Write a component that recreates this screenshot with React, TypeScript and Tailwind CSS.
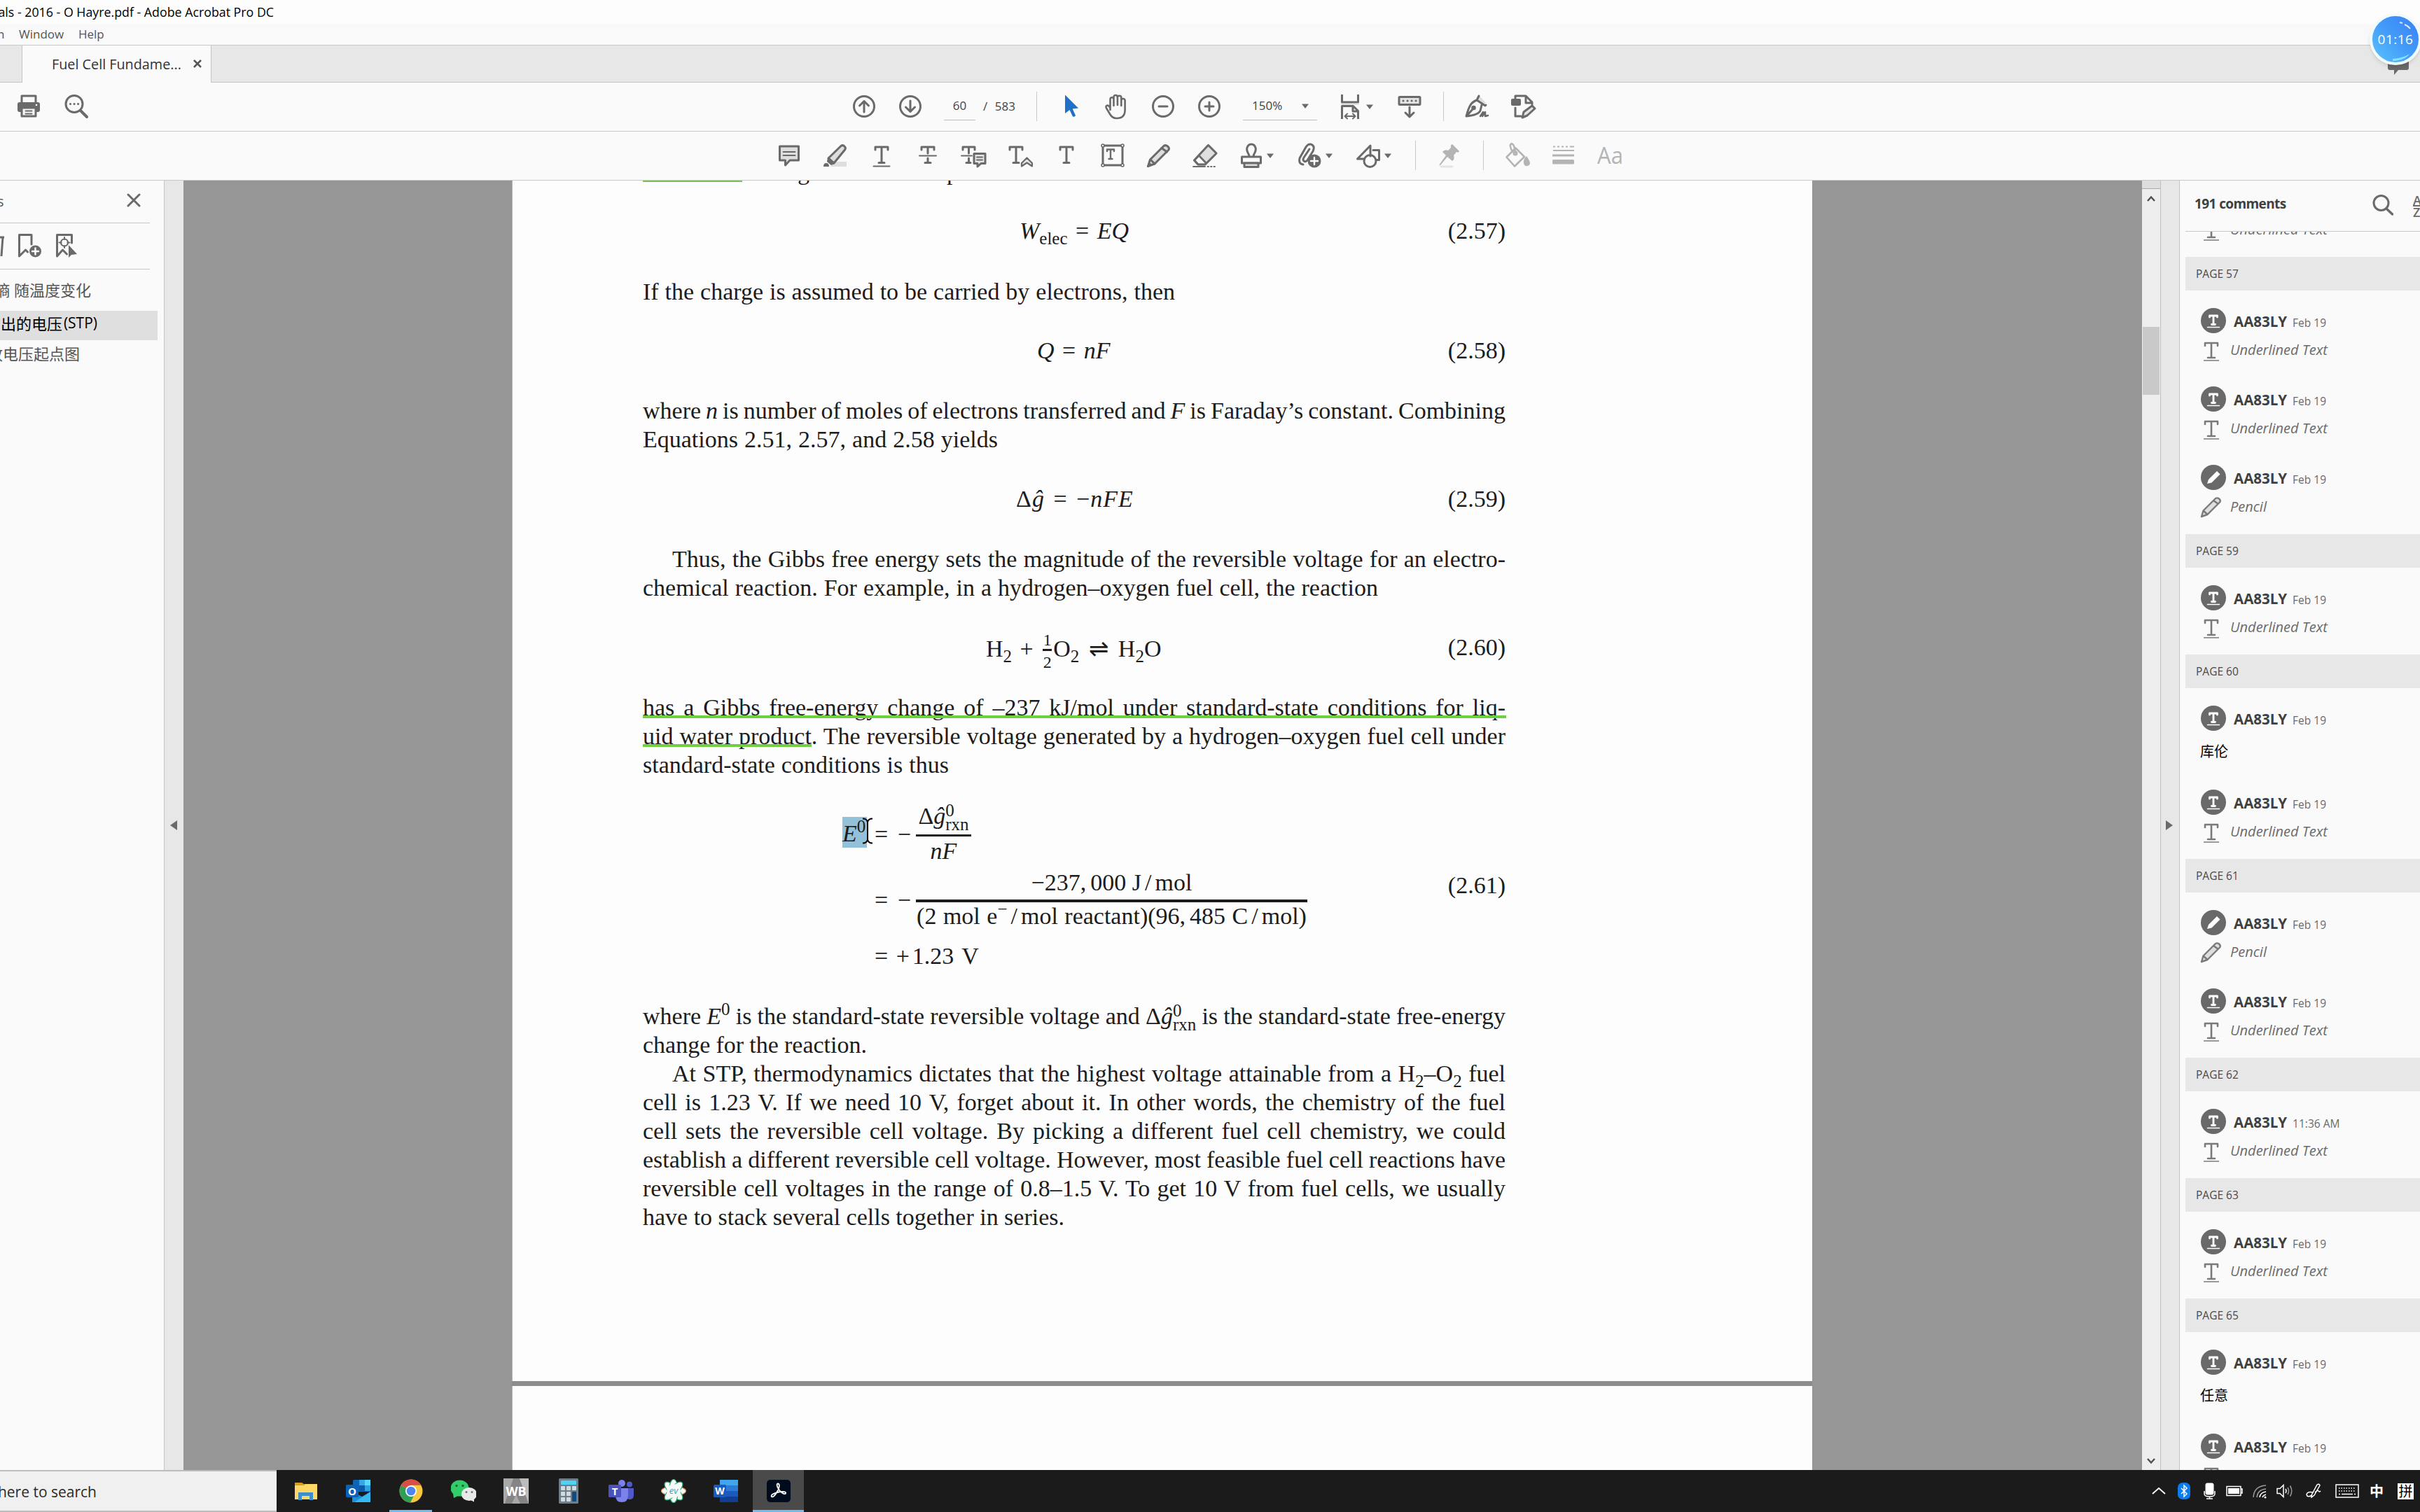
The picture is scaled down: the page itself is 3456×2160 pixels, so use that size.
import React from "react";

type IcoProps = { children: React.ReactNode; className?: string };

const Ico = ({ children, className = "" }: IcoProps) => (
  <svg
    viewBox="0 0 36 36"
    className={"w-9 h-9 shrink-0 overflow-visible fill-none stroke-[#6a6a6a] stroke-3 " + className}
    strokeLinecap="round"
    strokeLinejoin="round"
  >
    {children}
  </svg>
);

const Caret = ({ className = "" }: { className?: string }) => (
  <svg viewBox="0 0 12 12" className={"w-3 h-3 shrink-0 fill-[#6a6a6a] " + className}>
    <path d="M1 3.5h10L6 10z" />
  </svg>
);

const Sep = () => <div className="w-px h-[42px] bg-[#c8c8c8] shrink-0" />;

/* ---------- Toolbars ---------- */

const PageTools = () => (
  <div className="h-[70px] pl-[23px] pb-[2px] flex items-center border-b border-[#c8c8c8] bg-[#fafafa] font-['Open_Sans',sans-serif]">
    <div className="flex gap-8">
      <Ico>
        <path d="M8 12V3h20v9" />
        <rect x="2" y="12" width="32" height="14" rx="3" fill="#6a6a6a" stroke="none" />
        <rect x="8" y="20" width="20" height="12" fill="#f4f4f4" />
        <path d="M13.5 24.5h9M13.5 28.500h9" strokeWidth="1.8" />
        <circle cx="29" cy="16" r="1.3" fill="#fff" stroke="none" />
      </Ico>
      <Ico>
        <circle cx="15" cy="14.500" r="12" />
        <path d="M24 24l9 9" strokeWidth="4" />
        <path d="M9.500 14.500h.1M15 14.500h.1M20.500 14.500h.1" />
      </Ico>
    </div>

    <div className="ml-[1089px] flex items-center gap-[30px]">
      <Ico>
        <circle cx="18" cy="18" r="14.500" />
        <path d="M18 26V11M11.500 17L18 10.500l6.500 6.500" />
      </Ico>
      <Ico>
        <circle cx="18" cy="18" r="14.500" />
        <path d="M18 10v15M11.500 19L18 25.500l6.500-6.500" />
      </Ico>
      <div className="flex items-center">
        <div className="w-[45px] h-[41px] border-b border-[#bdbdbd] text-center text-[17px] leading-[40px] text-[#444]">
          60
        </div>
        <div className="ml-[11px] w-[46px] flex justify-between text-[17px] text-[#444]">
          <span>/</span>
          <span>583</span>
        </div>
      </div>
      <Sep />
      <Ico className="ml-px">
        <path
          d="M9 1.500v26.500l6.500-5 4.500 9.500q3 1 4-1.500l-4.300-9.500 8.300-1z"
          fill="#1f70c8"
          stroke="none"
        />
      </Ico>
      <Ico className="-ml-px">
        <path
          strokeWidth="2.600"
          d="M8.500 23V8q0-2.700 2.500-2.700T13.500 8v9M13.500 16V5q0-3 2.700-3t2.700 3v11M18.900 16V5.500q0-2.700 2.700-2.700T24.300 5.500V17M24.300 17V9.500q0-2.500 2.500-2.500t2.800 2.500V23q0 12-12 12-6 0-9.500-6L3 20.500q-1.500-3 1-3.800 1.500-.5 3 1.300L8.500 20"
        />
      </Ico>
      <Ico>
        <circle cx="18" cy="18" r="14.500" />
        <path d="M12 18h12" />
      </Ico>
      <Ico>
        <circle cx="18" cy="18" r="14.500" />
        <path d="M12 18h12M18 12v12" />
      </Ico>
      <div className="w-[106px] h-[41px] border-b border-[#bdbdbd] pl-[13px] pr-[11px] flex items-center justify-between text-[17px] text-[#444]">
        <span>150%</span>
        <Caret />
      </div>
      <div className="flex items-center gap-1 -ml-px">
        <Ico>
          <path d="M6.500 1v11h23V1" strokeLinecap="butt" />
          <path d="M6 14.800h24" stroke="#ddd" strokeWidth="2" />
          <path d="M6.500 36V17.500h16l7 7V36M22 17.500V25h7.500" strokeLinecap="butt" />
          <path d="M11 32h14M14 28.500L10.500 32l3.500 3.500M22 28.500l3.500 3.500-3.500 3.500" strokeWidth="2" />
        </Ico>
        <Caret />
      </div>
      <Ico className="ml-[3px]">
        <rect x="3" y="4.500" width="30" height="11" rx="1" fill="#e4e4e4" />
        <path d="M9 10h.1M15 10h.1M21 10h.1M27 10h.1" />
        <path d="M18 19v13M12 27l6 6 6-6" />
      </Ico>
      <Sep />
      <Ico>
        <path d="M21 3L30 13 26 17 17 9z" fill="#ddd" stroke="none" />
        <path d="M20 3l-3 6L29 17l1-1M17 9C9 12 6 17 2 32c11-1 18-3 20-8l2-8M3 31l9-10" />
        <circle cx="12.500" cy="20" r="1.800" fill="#6a6a6a" />
        <path d="M22 32q4-6 4-6l-1 6 4-6v6l4-1" strokeWidth="2.500" />
      </Ico>
      <Ico>
        <path d="M6 9V3h15l9 9v3M21 3v10h7M6 20v12h8" />
        <rect x="0" y="7" width="14" height="10" rx="2" fill="#6a6a6a" stroke="none" />
        <path d="M16 34l2-8 12-9 4 4-11 10z" fill="#e4e4e4" />
      </Ico>
    </div>
  </div>
);

const LetterT = () => <path d="M9 10V6h18v4M18 6v22.500M14 28.500h8" />;

const CommentTools = () => (
  <div className="h-[70px] pl-[1109px] pb-[2px] flex items-center gap-[30px] border-b border-[#c8c8c8] bg-[#fafafa]">
    <Ico>
      <path d="M4.500 5h27v20H19l-6.500 7V25h-8z" fill="#dedede" />
      <path d="M9.500 13h17M9.500 18h17" strokeWidth="1.800" />
    </Ico>
    <Ico>
      <path d="M10 34l9-7h15v7z" fill="#dedede" stroke="none" />
      <path d="M8 22L26 4.500q2.500-2 5 .5t.5 5L16 29z" fill="#dedede" />
      <path d="M7 21l10 9-5 2-6-5zM1 34q0-5 4-5t4 5z" fill="#6a6a6a" stroke="none" />
    </Ico>
    <Ico>
      <LetterT />
      <path d="M6.500 33.500h23" strokeWidth="2" />
    </Ico>
    <Ico>
      <path d="M9 10V6h18v4M18 6v9M18 22v6.500M14 28.500h8" />
      <path d="M6 18.500h24" strokeWidth="2" />
    </Ico>
    <Ico>
      <path d="M2 10V6h17v4M10.500 6v9M10.500 22v6.500M7 28.500h6" />
      <path d="M0 18.500h15" strokeWidth="2" />
      <path d="M18 15.500h16v14H28l-5 4.500v-4.500h-5z" fill="#e4e4e4" />
      <path d="M22 20.500h8M22 24.500h8" strokeWidth="1.800" />
    </Ico>
    <Ico>
      <path d="M3 10V6h18v4M12 6v22.500M8 28.500h8" />
      <path d="M20 29l7.500-7.500L35 29v4.500l-7.500-5-7.500 5z" fill="#e4e4e4" strokeWidth="2.200" />
    </Ico>
    <Ico>
      <LetterT />
    </Ico>
    <Ico>
      <rect x="4" y="4" width="28" height="28" />
      <path d="M10 12V9.500h10V12M15 9.500V23M12.500 23h5" strokeWidth="2.400" />
      <g fill="#fafafa" strokeWidth="1.600">
        <circle cx="4" cy="4" r="2" />
        <circle cx="32" cy="4" r="2" />
        <circle cx="4" cy="32" r="2" />
        <circle cx="32" cy="32" r="2" />
      </g>
    </Ico>
    <Ico>
      <path d="M2.500 33.500l3-9.500L25 4.500q2.500-2 5.500.5t1.500 5L12 30z" fill="#dedede" />
      <path d="M6 24l6 6M22 7.500l7.500 5.500M2.500 33.500l3-3" />
    </Ico>
    <Ico>
      <path d="M22.500 3.500L34 15 18 31H8L2.500 25z" fill="#fafafa" />
      <path d="M22.500 4.500L33 15 19 29 9 18.500z" fill="#dedede" stroke="none" />
      <path d="M22.500 3.500L34 15 18 31H8L2.500 25zM9 18l10.500 11" strokeWidth="2.600" />
      <path d="M1 34h17M21.500 34h1.500M26 34h1.500M30.500 34h1.500" strokeWidth="1.800" />
    </Ico>
    <div className="flex items-center gap-[3px]">
      <Ico>
        <path d="M15 20q0-3-2-6-2-4-1-7 1.500-5 6-5t6 5q1 3-1 7-2 3-2 6M4.500 20h27v9h-27z" />
        <path d="M8 29h20v5.500H8z" fill="#dedede" />
      </Ico>
      <Caret />
    </div>
    <div className="ml-[2px] flex items-center gap-1">
      <Ico>
        <path d="M9 31Q2 30 4 22L13 6q4-6 9-3 4 3 1 9l-8 13q-3 3-5 1-2-2 0-5L18 9" />
        <circle cx="25" cy="26" r="9.500" fill="#6a6a6a" stroke="none" />
        <path d="M25 21v10M20 26h10" stroke="#fff" strokeWidth="2.400" />
      </Ico>
      <Caret />
    </div>
    <div className="ml-[2px] flex items-center gap-1">
      <Ico>
        <path d="M12 23H2.500L21 4v15M25 10.500h8.500v14H30" />
        <circle cx="20.500" cy="26" r="8.500" />
      </Ico>
      <Caret />
    </div>
    <div className="ml-[3px] flex">
      <Sep />
    </div>
    <Ico>
      <path d="M6 34h16" stroke="#e4e4e4" />
      <path
        d="M22 2l10 10q-1 3-4 1l-4 5q2 5-2 8L15 20 5 32l-1.500.5.5-2L13 18 8 13q3-4 8-2l4-4q-1-4 2-5z"
        fill="#b4b4b4"
        stroke="none"
      />
    </Ico>
    <Sep />
    <Ico>
      <g stroke="#b4b4b4">
        <path d="M15.500 7.500L28 20 14 33.500 2.500 20.500zM11 13q-5-9-2-11.500 4-2 6 12" strokeWidth="2.600" />
        <circle cx="15" cy="15" r="2" />
        <path d="M31 19q5 7 5 10t-4 4-5-4 4-10z" fill="#b4b4b4" stroke="none" />
      </g>
    </Ico>
    <Ico>
      <g stroke="#b4b4b4" strokeLinecap="butt">
        <path d="M3 5.500h3M9 5.500h3M15 5.500h3M21 5.500h3M27 5.500h6M3 11h30" strokeWidth="1.800" />
        <path d="M2 18h31" />
        <rect x="2" y="24" width="31" height="6.500" rx="1.500" fill="#b4b4b4" stroke="none" />
      </g>
    </Ico>
    <div className="w-9 font-['Open_Sans',sans-serif] text-[32px] leading-9 text-[#b4b4b4]">
      <span className="inline-block origin-left scale-x-[.97]">Aa</span>
    </div>
  </div>
);

/* ---------- Bookmarks ---------- */

const Bookmarks = () => (
  <div className="w-[235px] shrink-0 border-r border-[#c4c4c4] bg-[#fafafa] text-[22px] text-[#555] font-['Open_Sans','Noto_Sans_CJK_SC',sans-serif]">
    <div className="w-[214px] h-[61px] border-b border-[#c8c8c8] flex items-center justify-between overflow-hidden">
      <span className="-ml-[4px] text-[20px]">s</span>
      <svg viewBox="0 0 20 20" className="w-5 h-5 mr-[13px] mb-[5px] stroke-[#6a6a6a] stroke-3">
        <path d="M2 2l16 16M18 2L2 18" strokeLinecap="round" />
      </svg>
    </div>
    <div className="w-[214px] h-[66px] pb-[2px] border-b border-[#c8c8c8] flex items-center">
      <svg viewBox="0 0 6 36" className="w-1.5 h-9 fill-none stroke-[#6a6a6a] stroke-3">
        <path d="M0 6h6M4 6L2 33" />
      </svg>
      <Ico className="ml-[18px]">
        <path d="M21 16V2.500H3.500V33l9-9 3 3" />
        <circle cx="26.500" cy="26" r="8.500" fill="#6a6a6a" stroke="none" />
        <path d="M26.500 21.500v9M22 26h9" stroke="#fff" strokeWidth="2.400" />
      </Ico>
      <Ico className="ml-[18px]">
        <path d="M24.500 14V2.500H3.500V33l8-9 6 6" />
        <circle cx="14" cy="13.500" r="5" strokeWidth="2.200" />
        <path d="M14 6v3M14 18v3M6.500 13.500h3M18.500 13.500h3" strokeWidth="2" />
        <path d="M20 17v18l4-4 8-1z" fill="#6a6a6a" stroke="none" />
      </Ico>
    </div>
    <div className="mt-[8px] w-[130px] h-[42px] flex items-center justify-end overflow-hidden whitespace-pre">
      熵 随温度变化
    </div>
    <div className="mt-[9px] w-[225px] h-[42px] bg-[#dfdfdf] text-black">
      <div className="w-[139px] h-9 flex items-center justify-end overflow-hidden whitespace-nowrap">
        出的电压<span className="pl-[2px] text-[21px]">(STP)</span>
      </div>
    </div>
    <div className="-mt-[2px] w-[114px] h-[42px] flex items-center justify-end overflow-hidden whitespace-nowrap">
      放电压起点图
    </div>
  </div>
);

/* ---------- Document ---------- */

const Sub = ({ children }: { children: React.ReactNode }) => (
  <span className="text-[25px] leading-[0] align-[-8px]">{children}</span>
);
const Sup = ({ children }: { children: React.ReactNode }) => (
  <span className="text-[25px] leading-[0] align-[13px]">{children}</span>
);

const DeltaG = () => (
  <span className="whitespace-nowrap">
    Δ<i>ĝ</i>
    <span className="inline-flex flex-col text-[25px] leading-[20px] align-[11px] text-left">
      <span>0</span>
      <span>rxn</span>
    </span>
  </span>
);

// one typeset line, stretched to its measured width
const Line = ({ className, children }: { className: string; children: React.ReactNode }) => (
  <div
    className={"relative h-[41px] whitespace-nowrap [word-spacing:-2px] [text-align-last:justify] " + className}
  >
    {children}
  </div>
);

const Equation = ({ className, no, children }: { className: string; no: string; children: React.ReactNode }) => (
  <div className="h-[41px] flex justify-between whitespace-nowrap [word-spacing:3px]">
    <div className={className}>{children}</div>
    <div>({no})</div>
  </div>
);

const PdfPage = () => (
  <div className="h-[1715px] pl-[186px] bg-[#fdfdfd] border-l border-[#b5b5b5] text-[#1c1c1c] text-[34px] leading-[41px] font-['Liberation_Serif',serif]">
    <div className="w-[1232px]">
      <div className="relative h-2 flex items-end overflow-hidden">
        <div className="absolute left-0 top-0 w-[142px] h-[2px] bg-[#7cc05a]" />
        <span className="ml-[221px]">g</span>
        <span className="ml-[196px]">p</span>
      </div>
      <div className="mt-[43px]">
        <Equation className="ml-[538px]" no="2.57">
          <i>W</i>
          <Sub>elec</Sub> = <i>EQ</i>
        </Equation>
      </div>
      <Line className="mt-[46px] w-[760px]">If the charge is assumed to be carried by electrons, then</Line>
      <div className="mt-[43px]">
        <Equation className="ml-[563px]" no="2.58">
          <i>Q</i> = <i>nF</i>
        </Equation>
      </div>
      <Line className="mt-[45px] w-[1232px]">
        where <i>n</i> is number of moles of electrons transferred and <i>F</i> is Faraday’s constant. Combining
      </Line>
      <Line className="w-[507px]">Equations 2.51, 2.57, and 2.58 yields</Line>
      <div className="mt-[44px]">
        <Equation className="ml-[533px] tracking-[1px]" no="2.59">
          Δ<i>ĝ</i> = −<i>nFE</i>
        </Equation>
      </div>
      <Line className="mt-[45px] ml-[42px] w-[1190px]">
        Thus, the Gibbs free energy sets the magnitude of the reversible voltage for an electro-
      </Line>
      <Line className="w-[1050px]">chemical reaction. For example, in a hydrogen–oxygen fuel cell, the reaction</Line>
      <div className="mt-[44px]">
        <Equation className="ml-[490px]" no="2.60">
          H<Sub>2</Sub> +{" "}
          <span className="mx-[2px] inline-flex flex-col items-center text-[24px] leading-[20px] align-[16px]">
            <span>1</span>
            <span className="w-[13px] h-[3px] my-[3px] bg-[#1c1c1c]" />
            <span className="mt-[3px]">2</span>
          </span>
          O<Sub>2</Sub> <span className="mx-[2px] font-['DejaVu_Sans',sans-serif] leading-[0]">⇌</span> H
          <Sub>2</Sub>O
        </Equation>
      </div>
      <Line className="mt-[45px] w-[1232px]">
        has a Gibbs free-energy change of –237 kJ/mol under standard-state conditions for liq-
        <span className="absolute left-0 top-[32px] w-[1233px] h-1 bg-[#6fcf41]" />
      </Line>
      <Line className="w-[1232px]">
        uid water product. The reversible voltage generated by a hydrogen–oxygen fuel cell under
        <span className="absolute left-0 top-[32px] w-[241px] h-1 bg-[#6fcf41]" />
      </Line>
      <Line className="w-[437px]">standard-state conditions is thus</Line>

      <div className="mt-8 flex justify-between whitespace-nowrap">
        <div className="ml-[285px]">
          <div className="flex h-[91px]">
            <div className="relative mt-[22px] w-[35px] h-[44px] bg-[#94c1da] pt-[3px]">
              <i>E</i>
              <Sup>0</Sup>
              <svg
                viewBox="0 0 16 38"
                className="absolute left-[28px] top-px w-4 h-[38px] fill-none stroke-black stroke-2"
              >
                <path d="M1 1.500q6 0 7 5 1-5 7-5M8 6v26M1 36.500q6 0 7-5 1 5 7 5" />
              </svg>
            </div>
            <div className="mt-[26px] ml-[11px] w-[59px]">
              = <span className="ml-[5px]">−</span>
            </div>
            <div className="w-[79px] text-center">
              <div className="h-[47px] border-b-[3px] border-[#1c1c1c] box-content">
                <DeltaG />
              </div>
              <i>nF</i>
            </div>
          </div>
          <div className="mt-1 flex h-[89px]">
            <div className="mt-[25px] ml-[46px] w-[59px]">
              = <span className="ml-[5px]">−</span>
            </div>
            <div className="w-[559px] text-center">
              <div className="h-[45px] border-b-4 border-[#1c1c1c] box-content">
                −237,<span className="ml-[6px]">000</span> J<span className="px-[5px]">/</span>mol
              </div>
              <div className="-mt-px [word-spacing:1px]">
                (2 mol e<Sup>−</Sup>
                <span className="px-[5px]">/</span>mol reactant)(96,<span className="ml-[6px]">485</span> C
                <span className="px-[5px]">/</span>mol)
              </div>
            </div>
          </div>
          <div className="mt-4 ml-[46px] h-[41px] [word-spacing:3px]">
            = +<span className="ml-[4px]">1.23 V</span>
          </div>
        </div>
        <div className="mt-[99px]">(2.61)</div>
      </div>

      <Line className="mt-[45px] w-[1232px]">
        where <i>E</i>
        <Sup>0</Sup> is the standard-state reversible voltage and <DeltaG /> is the standard-state free-energy
      </Line>
      <Line className="w-[320px]">change for the reaction.</Line>
      <Line className="ml-[42px] w-[1190px]">
        At STP, thermodynamics dictates that the highest voltage attainable from a H<Sub>2</Sub>–O<Sub>2</Sub> fuel
      </Line>
      <Line className="w-[1232px]">
        cell is 1.23 V. If we need 10 V, forget about it. In other words, the chemistry of the fuel
      </Line>
      <Line className="w-[1232px]">
        cell sets the reversible cell voltage. By picking a different fuel cell chemistry, we could
      </Line>
      <Line className="w-[1232px]">
        establish a different reversible cell voltage. However, most feasible fuel cell reactions have
      </Line>
      <Line className="w-[1232px]">
        reversible cell voltages in the range of 0.8–1.5 V. To get 10 V from fuel cells, we usually
      </Line>
      <Line className="w-[602px]">have to stack several cells together in series.</Line>
    </div>
  </div>
);

const ScrollBar = () => (
  <div className="w-[27px] shrink-0 border-r border-[#c0c0c0] bg-[#eeeeee] flex flex-col items-center">
    <div className="w-full h-3 bg-[#dedede] border-b border-[#a8a8a8]" />
    <svg viewBox="0 0 12 10" className="mt-[9px] w-3 h-2.5 fill-none stroke-[#505050] stroke-[2.5]">
      <path d="M1 8l5-5.500L11 8" />
    </svg>
    <div className="mt-[178px] w-6 h-[97px] bg-[#c9c9c9]" />
    <svg viewBox="0 0 12 10" className="mt-auto mb-2 w-3 h-2.5 fill-none stroke-[#505050] stroke-[2.5]">
      <path d="M1 2l5 5.500L11 2" />
    </svg>
  </div>
);

/* ---------- Comments ---------- */

type Comment = { kind: "underline" | "pencil"; date?: string; text?: string };
type Section = { page: number; comments: Comment[] };

const sections: Section[] = [
  { page: 57, comments: [{ kind: "underline" }, { kind: "underline" }, { kind: "pencil" }] },
  { page: 59, comments: [{ kind: "underline" }] },
  { page: 60, comments: [{ kind: "underline", text: "库伦" }, { kind: "underline" }] },
  { page: 61, comments: [{ kind: "pencil" }, { kind: "underline" }] },
  { page: 62, comments: [{ kind: "underline", date: "11:36 AM" }] },
  { page: 63, comments: [{ kind: "underline" }] },
  { page: 65, comments: [{ kind: "underline", text: "任意" }, { kind: "underline" }] },
];

const CommentItem = ({ kind, date = "Feb 19", text }: Comment) => (
  <div className={text ? "pl-[22px] h-[84px]" : "pl-[22px] h-[76px]"}>
    <div className="h-9 flex items-center">
      <Ico>
        <circle cx="18" cy="18" r="18" fill="#696969" stroke="none" />
        {kind === "underline" ? (
          <>
            <path d="M12.500 13v-2h11v2M18 11v12.500M15.500 23.500h5" stroke="#fff" strokeWidth="2.800" />
            <path d="M9.500 27.500h17" stroke="#fff" strokeWidth="1.600" />
          </>
        ) : (
          <path d="M9 27l2-6 12-12 4.500 4.500-12 12z" fill="#fff" stroke="none" />
        )}
      </Ico>
      <div className="ml-[11px] mt-px flex items-baseline whitespace-nowrap">
        <span className="text-[20.500px] leading-9 font-bold text-[#404040]">AA83LY</span>
        <span className="ml-2 text-[15.500px] text-[#6a6a6a]">{date}</span>
      </div>
    </div>
    {text ? (
      <div className="mt-3 -ml-px text-[20px] leading-9 text-black">{text}</div>
    ) : (
      <div className="h-10 flex items-center">
        {kind === "underline" ? (
          <svg viewBox="0 0 22 28" className="ml-1 mt-[11px] w-[22px] h-7 fill-none stroke-[#7a7a7a] stroke-[2.600]">
            <path d="M2 6V2h18v4M11 2v21M6 23h10" strokeLinecap="round" strokeLinejoin="round" />
            <path d="M0 27h22" strokeWidth="1.500" />
          </svg>
        ) : (
          <svg viewBox="0 0 31 31" className="-ml-px mt-[8px] w-[31px] h-[31px] fill-[#dedede] stroke-[#7a7a7a] stroke-[2.400]">
            <path d="M2 29l2.500-8.500L22 3q2.500-1.500 5 .5t1.500 4.500L10.500 26zM4.500 20.500l6 5.500M19 6l7 5" strokeLinejoin="round" />
          </svg>
        )}
        <span
          className={
            kind === "underline"
              ? "ml-[16px] mt-[8px] text-[20px] italic text-[#6a6a6a]"
              : "ml-[12px] mt-[8px] text-[20px] italic text-[#6a6a6a]"
          }
        >
          {kind === "underline" ? "Underlined Text" : "Pencil"}
        </span>
      </div>
    )}
  </div>
);

const Comments = () => (
  <div className="w-[344px] shrink-0 pl-2 border-l border-[#c4c4c4] bg-[#fafafa] flex flex-col overflow-hidden font-['Open_Sans','Noto_Sans_CJK_SC',sans-serif]">
    <div className="h-[73px] shrink-0 pl-[13px] border-b border-[#c8c8c8] flex items-center overflow-hidden">
      <span className="w-[254px] shrink-0 mb-[6px] text-[19px] tracking-[-.6px] font-bold text-[#404040]">
        191 comments
      </span>
      <svg viewBox="0 0 30 30" className="w-[30px] h-[30px] shrink-0 mb-[2px] fill-none stroke-[#6a6a6a] stroke-3">
        <circle cx="12.500" cy="12" r="10.500" />
        <path d="M20 20l8.500 8" strokeLinecap="round" strokeWidth="3.500" />
      </svg>
      <div className="ml-[28px] text-[18px] leading-[14px] font-semibold text-[#6a6a6a]">
        <div className="border-b-2 border-[#6a6a6a]">A</div>
        <div className="mt-px">Z</div>
      </div>
    </div>
    <div className="grow overflow-hidden">
      <div className="-mt-[63px] pb-[23px]">
        <CommentItem kind="underline" />
      </div>
      {sections.map((section) => (
        <div key={section.page} className="pb-[23px]">
          <div className="h-12 pl-[15px] mb-[25px] bg-[#e7e7e7] text-[15.500px] leading-[48px] text-[#4a4a4a]">
            PAGE {section.page}
          </div>
          <div className="flex flex-col gap-9">
            {section.comments.map((comment, index) => (
              <CommentItem key={index} {...comment} />
            ))}
          </div>
        </div>
      ))}
    </div>
  </div>
);

/* ---------- Taskbar ---------- */

const TaskIcon = ({ children, state = "" }: { children: React.ReactNode; state?: string }) => (
  <div
    className={
      state === "active"
        ? "w-[73px] mx-px h-[60px] pt-[3px] flex items-center justify-center bg-[#4a4a4a] border-b-[3px] border-[#76b9ed]"
        : "w-[75px] h-[60px] flex items-center justify-center"
    }
  >
    <div
      className={
        state === "running"
          ? "w-[61px] h-[60px] pt-[3px] flex items-center justify-center border-b-[3px] border-[#76b9ed]"
          : "flex"
      }
    >
      <svg viewBox="0 0 36 36" className="w-9 h-9">
        {children}
      </svg>
    </div>
  </div>
);

const Taskbar = () => (
  <div className="h-[60px] bg-[#1b1b1b] flex items-center font-['Open_Sans',sans-serif]">
    <div className="w-[395px] h-[60px] border-y-2 border-[#bdbdbd] bg-[#f0f0f0] overflow-hidden">
      <div className="w-[138px] h-14 pt-[3px] flex items-center justify-end whitespace-nowrap text-[21px] text-[#2b2b2b]">
        here to search
      </div>
    </div>
    <div className="ml-1 flex">
      <TaskIcon>
        <path d="M2 6h10l3 2h4v4H2z" fill="#d79b1e" />
        <path d="M2 10h13l2-2h17v22H2z" fill="#fbd768" />
        <path d="M7 31V20h21v11h-5v-6H12v6z" fill="#3c8fc9" />
      </TaskIcon>
      <TaskIcon>
        <rect x="10" y="2" width="25" height="17" rx="1.500" fill="#1066b5" />
        <path d="M19 2h8v8h-8z" fill="#32a9e7" />
        <path d="M27 2h8v8h-8z" fill="#58d9fd" />
        <path d="M19 10h8v8h-8z" fill="#0b5ba8" />
        <path d="M27 10h8v8h-8z" fill="#2aa2e2" />
        <path d="M9 19l14 7 12-7v15H9z" fill="#1a90dc" />
        <path d="M35 19v15H12z" fill="#37b8f0" />
        <rect x="0" y="9" width="18" height="18" rx="1.500" fill="#0b62b8" />
        <text x="9" y="23.500" textAnchor="middle" fill="#fff" fontSize="15" fontWeight="bold">O</text>
      </TaskIcon>
      <TaskIcon state="running">
        <circle cx="18" cy="18" r="16.500" fill="#f7c73f" />
        <path d="M18 18L3.700 9.800A16.500 16.500 0 0 0 17 34.500L24 21z" fill="#2f9e56" />
        <path d="M3.700 9.800A16.500 16.500 0 0 1 32.300 9.800H18v8z" fill="#d94f43" />
        <circle cx="18" cy="18" r="8" fill="#fff" />
        <circle cx="18" cy="18" r="6.300" fill="#4b86ee" />
      </TaskIcon>
      <TaskIcon>
        <ellipse cx="12.500" cy="14" rx="13" ry="11.500" fill="#32cd68" />
        <path d="M3 22l1 6 6-3z" fill="#32cd68" />
        <circle cx="8" cy="10.500" r="1.700" fill="#16663a" />
        <circle cx="17" cy="10.500" r="1.700" fill="#16663a" />
        <ellipse cx="26" cy="22.500" rx="11" ry="9.500" fill="#e9e9e9" />
        <path d="M28 31l5 2.500 0-6z" fill="#e9e9e9" />
        <circle cx="22" cy="19.500" r="1.500" fill="#777" />
        <circle cx="30" cy="19.500" r="1.500" fill="#777" />
      </TaskIcon>
      <TaskIcon>
        <rect width="36" height="36" fill="#a9a9a9" />
        <path d="M14 0h9l13 36H24l-6-13-6 13H2z" fill="#858585" />
        <path d="M23 0h13v36z" fill="#bcbcbc" />
        <text x="18" y="25" textAnchor="middle" fill="#fff" fontSize="18" fontWeight="bold" textLength="29" lengthAdjust="spacingAndGlyphs">WB</text>
      </TaskIcon>
      <TaskIcon>
        <rect x="4" width="28" height="36" rx="1.500" fill="#6d7f8b" />
        <rect x="7" y="3" width="22" height="6" rx="1" fill="#4fd3f5" />
        <g fill="#d3d9dd">
          <rect x="7" y="11" width="6" height="6" rx="1" />
          <rect x="15" y="11" width="6" height="6" rx="1" />
          <rect x="23" y="11" width="6" height="6" rx="1" />
          <rect x="7" y="19" width="6" height="6" rx="1" />
          <rect x="15" y="19" width="6" height="6" rx="1" />
          <rect x="7" y="27" width="6" height="6" rx="1" />
          <rect x="15" y="27" width="6" height="6" rx="1" />
        </g>
        <rect x="23" y="19" width="6" height="14" rx="1" fill="#154a80" />
      </TaskIcon>
      <TaskIcon>
        <circle cx="19" cy="7" r="5" fill="#7b83eb" />
        <circle cx="30" cy="8.500" r="4" fill="#5059c9" />
        <path d="M24 14h12v10q0 6-6 6-4 0-6-3z" fill="#5059c9" />
        <path d="M10 14h18v10q0 10-9 10t-9-10z" fill="#7b83eb" />
        <rect x="0" y="9" width="18" height="18" rx="1.500" fill="#4b53bc" />
        <text x="9" y="23.500" textAnchor="middle" fill="#fff" fontSize="15" fontWeight="bold">T</text>
      </TaskIcon>
      <TaskIcon>
        <g fill="#f4fbf8" strokeWidth="1.200">
          <ellipse cx="18" cy="18" rx="17.500" ry="6.500" stroke="#d98a5c" />
          <ellipse cx="18" cy="18" rx="17" ry="6.500" stroke="#2fae72" transform="rotate(45 18 18)" />
          <ellipse cx="18" cy="18" rx="16.500" ry="6.500" stroke="#2fae72" transform="rotate(90 18 18)" />
          <ellipse cx="18" cy="18" rx="17" ry="6.500" stroke="#2fae72" transform="rotate(135 18 18)" />
        </g>
        <circle cx="18" cy="18" r="10" fill="#f4fbf8" />
        <text x="18" y="22" textAnchor="middle" fill="#4a9ac0" fontSize="13" fontStyle="italic">ev</text>
      </TaskIcon>
      <TaskIcon>
        <path d="M9 2h26v8H9z" fill="#41a5ee" />
        <path d="M9 10h26v8H9z" fill="#2b7cd3" />
        <path d="M9 18h26v8H9z" fill="#185abd" />
        <path d="M9 26h26v8H9z" fill="#103f91" />
        <rect x="0" y="9" width="18" height="18" rx="1.500" fill="#185abd" />
        <text x="9" y="23" textAnchor="middle" fill="#fff" fontSize="14" fontWeight="bold">W</text>
      </TaskIcon>
      <TaskIcon state="active">
        <rect x="1" y="2" width="34" height="32" rx="5" fill="#000b1d" />
        <path
          d="M8 26c-2-2 3-5 10-6.500s11 0 10 2-7-1-10-6-3-8-1-8 3 4 0 9.500S10 28 8 26z"
          fill="none"
          stroke="#fff"
          strokeWidth="1.800"
        />
      </TaskIcon>
    </div>

    <div className="ml-[1922px] flex items-center gap-3 stroke-white fill-none text-white">
      <svg viewBox="0 0 24 24" className="w-6 h-6 stroke-[1.800]">
        <path d="M3 16l9-8 9 8" />
      </svg>
      <svg viewBox="0 0 24 24" className="w-6 h-6">
        <rect x="3" y="0" width="18" height="24" rx="7" fill="#0a7cf0" stroke="none" />
        <path d="M8 8l8 8-4 4V4l4 4-8 8" strokeWidth="1.500" />
      </svg>
      <svg viewBox="0 0 24 24" className="w-6 h-6">
        <rect x="7" y="1" width="11" height="16" rx="2" fill="#fff" />
        <path d="M5 12v4q0 4 7.500 4t7.500-4v-4M12.500 20v3M8 23h9" strokeWidth="1.500" />
      </svg>
      <svg viewBox="0 0 24 24" className="w-6 h-6">
        <path d="M1 5.500h20v13H1zM21 9h2v6h-2" strokeWidth="1.500" />
        <rect x="3" y="8" width="16" height="8" fill="#fff" stroke="none" />
      </svg>
      <svg viewBox="0 0 24 24" className="w-6 h-6">
        <path d="M3 21Q4 5 21 4M8 21Q9 10 21 9" stroke="#9a9a9a" strokeWidth="1.500" />
        <path d="M12 21q1-7 9-8M16 21q1-3 5-4" strokeWidth="1.500" />
        <circle cx="20" cy="21" r="1.500" fill="#fff" stroke="none" />
      </svg>
      <svg viewBox="0 0 24 24" className="w-6 h-6">
        <path d="M1 8.500h4l5-5v17l-5-5H1zM13 9q2 3 0 6" strokeWidth="1.500" />
        <path d="M16 7q3 5 0 10M19.500 4.500q4.500 7.500 0 15" stroke="#999" strokeWidth="1.500" />
      </svg>
      <svg viewBox="0 0 24 24" className="ml-[5px] w-6 h-6">
        <path d="M9 18L17 3q3-2 4 1L13 18l-4 3zM12 14q-9-2-10 3 1 5 8 1M14 14q4-4 5-2t3 0" strokeWidth="1.500" />
      </svg>
      <svg viewBox="0 0 34 20" className="w-[34px] h-5 ml-[7px]">
        <rect x="1" y="1" width="32" height="18" strokeWidth="1.500" />
        <path d="M5 6h24M5 10h24" strokeWidth="1.500" strokeDasharray="1.500 2" />
        <path d="M5 14.500h2M9 14.500h16M27 14.500h2" strokeWidth="1.500" />
      </svg>
      <span className="ml-[3px] text-[20px] leading-6 font-bold font-['Noto_Sans_CJK_SC',sans-serif]">中</span>
      <span className="ml-2 w-[23px] h-[23px] bg-white text-black text-[20px] leading-[22px] text-center font-['Noto_Sans_CJK_SC',sans-serif]">
        拼
      </span>
    </div>
  </div>
);

/* ---------- Window ---------- */

const App = () => {
  return (
    <div className="relative w-[3456px] h-[2160px] overflow-hidden flex flex-col bg-[#fafafa] font-['Open_Sans',sans-serif]">
      <div className="h-[34px] shrink-0 bg-[#fdfdfd] overflow-hidden">
        <div className="w-[391px] flex justify-end whitespace-nowrap text-[17.800px] leading-[34px] text-black">
          als - 2016 - O Hayre.pdf - Adobe Acrobat Pro DC
        </div>
      </div>
      <div className="h-[31px] shrink-0 flex border-b border-[#c8c8c8] bg-[#f9f9f9] text-[17px] leading-[30px] text-[#555]">
        <span className="-ml-[4px] w-[31px]">n</span>
        <span className="w-[85px]">Window</span>
        <span>Help</span>
      </div>
      <div className="h-[53px] shrink-0 flex bg-[#e7e7e7]">
        <div className="w-8 border-r border-b border-[#c4c4c4]" />
        <div className="w-[269px] pl-[42px] flex items-center bg-[#fafafa] text-[19.800px] text-[#333]">
          <span className="w-[202px] whitespace-nowrap">Fuel Cell Fundame...</span>
          <svg viewBox="0 0 12 12" className="w-3 h-3 mb-[2px] stroke-[#555] stroke-[2.500]">
            <path d="M1 1l10 10M11 1L1 11" />
          </svg>
        </div>
        <div className="grow border-l border-b border-[#c4c4c4] flex justify-end items-end pb-[10px] pr-4">
          <svg viewBox="0 0 30 30" className="w-[30px] h-[30px] fill-[#6a6a6a]">
            <path d="M0 0h30v20q0 3-3 3H15l-6 7v-7H3q-3 0-3-3z" />
          </svg>
        </div>
      </div>

      <PageTools />
      <CommentTools />

      <div className="h-[1842px] shrink-0 flex">
        <Bookmarks />
        <div className="w-[27px] shrink-0 bg-[#e7e7e7] flex items-center justify-center">
          <svg viewBox="0 0 10 14" className="w-2.5 h-3.5 mr-[2px] fill-[#6a6a6a]">
            <path d="M10 0v14L0 7z" />
          </svg>
        </div>
        <div className="w-[2797px] shrink-0 bg-[#969696] pl-[469px] overflow-hidden">
          <div className="w-[1857px]">
            <PdfPage />
            <div className="h-[7px] bg-[#8c8c8c]" />
            <div className="h-[130px] bg-[#fdfdfd] border-l border-[#b5b5b5]" />
          </div>
        </div>
        <ScrollBar />
        <div className="w-[26px] shrink-0 bg-[#e7e7e7] flex items-center justify-center">
          <svg viewBox="0 0 10 14" className="w-2.5 h-3.5 mr-[2px] fill-[#6a6a6a]">
            <path d="M0 0v14l10-7z" />
          </svg>
        </div>
        <Comments />
      </div>

      <Taskbar />

      {/* recorder timer floating over the window */}
      <div className="absolute left-[3384px] top-[19px] w-[74px] h-[74px] rounded-full border-[4px] border-[#f1fafd] bg-linear-to-tr from-[#5cc4fb] via-[#439bf9] to-[#3a7ef5] shadow-md flex items-center justify-center text-[19px] tracking-[.5px] text-white">
        01:16
        <svg viewBox="0 0 66 66" className="absolute inset-0 fill-none stroke-white/80 stroke-2">
          <path d="M39 9l4 1M46 12q5 2 8 6" />
          <path d="M29 64q18-1 24-10-9 6-24 7z" className="fill-[#8be0fc] stroke-none" />
        </svg>
      </div>
    </div>
  );
};

export default App;
